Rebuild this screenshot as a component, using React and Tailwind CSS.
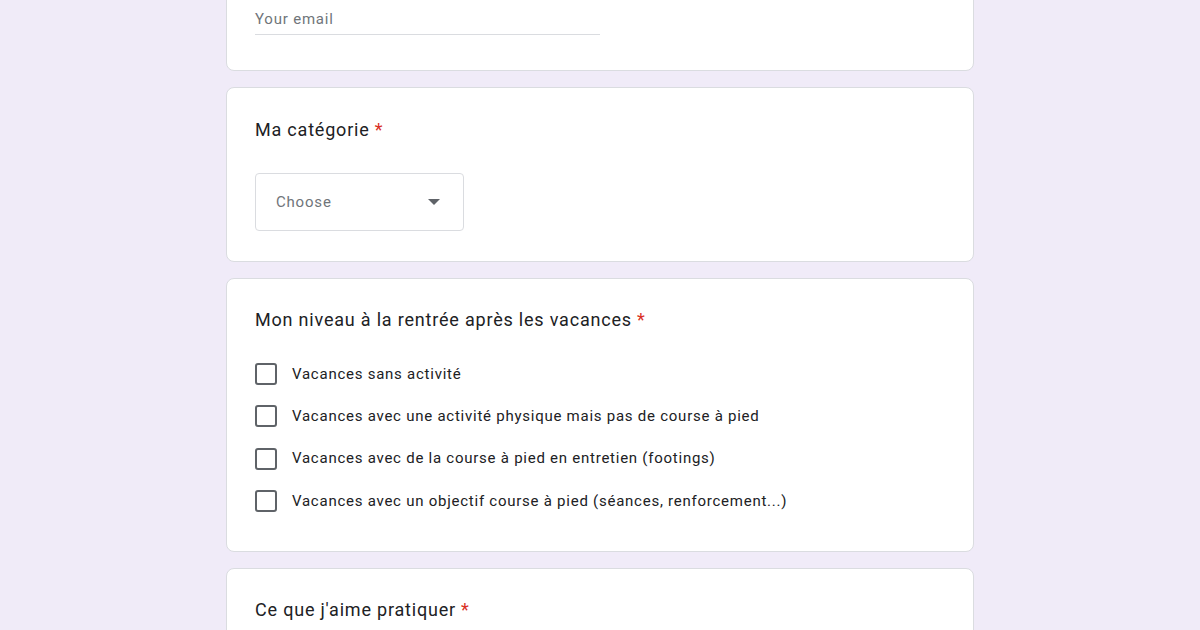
const options = [
  'Vacances sans activité',
  'Vacances avec une activité physique mais pas de course à pied',
  'Vacances avec de la course à pied en entretien (footings)',
  'Vacances avec un objectif course à pied (séances, renforcement...)',
]

function Card({ children, className = '' }) {
  return (
    <div className={`w-[748px] shrink-0 bg-white border border-[#dadce0] rounded-[8px] ${className}`}>
      {children}
    </div>
  )
}

function Title({ children }) {
  return (
    <h2 className="text-[18px] leading-[24px] text-[#202124] tracking-[0.8px]">
      {children}
      <span className="text-[#d93025] ml-[5px]">*</span>
    </h2>
  )
}

export default function App() {
  return (
    <div
      className="bg-[#f0ebf8] flex flex-col items-center gap-[16px] overflow-hidden h-[630px]"
      style={{ fontFamily: 'Roboto, "Noto Sans", Arial, sans-serif' }}
    >
      {/* email card, top cut off */}
      <Card className="-mt-[30px] h-[101px] px-[28px] pt-[38px]">
        <div className="w-[345px] border-b border-[#dadce0] pb-[5px]">
          <span className="block text-[15px] leading-[20px] text-[#70757a] tracking-[0.8px]">Your email</span>
        </div>
      </Card>

      {/* category */}
      <Card className="px-[28px] pt-[30px] pb-[30px]">
        <Title>Ma catégorie</Title>
        <div className="mt-[31px] w-[209px] h-[58px] border border-[#dadce0] rounded-[4px] flex items-center justify-between pl-[20px] pr-[20px]">
          <span className="text-[15px] text-[#70757a] tracking-[0.8px]">Choose</span>
          <svg width="12" height="6" viewBox="0 0 12 6" className="mr-[3px]">
            <path d="M0 0 L12 0 L6 6 Z" fill="#5f6368" />
          </svg>
        </div>
      </Card>

      {/* level */}
      <Card className="px-[28px] pt-[29px] pb-[29px]">
        <Title>Mon niveau à la rentrée après les vacances</Title>
        <div className="mt-[21px] flex flex-col">
          {options.map((o) => (
            <label key={o} className="flex items-center h-[42.3px] gap-[15px]">
              <span className="w-[22px] h-[22px] border-2 border-[#5f6368] rounded-[3px] shrink-0" />
              <span className="text-[15px] text-[#202124] tracking-[0.75px]">{o}</span>
            </label>
          ))}
        </div>
      </Card>

      {/* practice */}
      <Card className="px-[28px] pt-[29px] h-[200px]">
        <Title>Ce que j'aime pratiquer</Title>
      </Card>
    </div>
  )
}
